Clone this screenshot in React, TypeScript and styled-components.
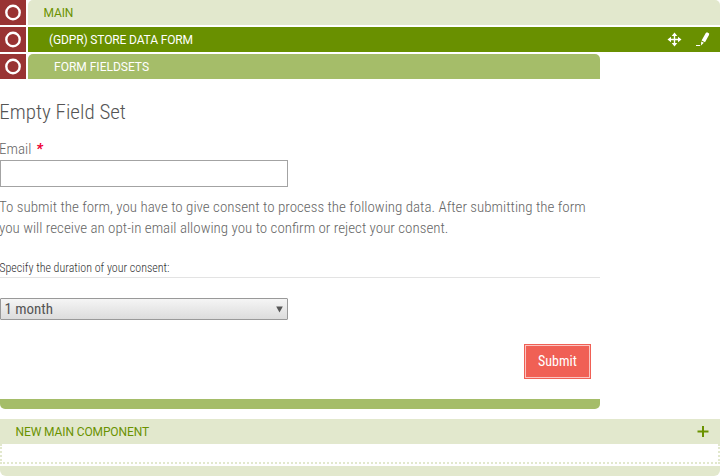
import React from "react";
import styled, { createGlobalStyle } from "styled-components";

const GlobalStyle = createGlobalStyle`
  * { box-sizing: border-box; }
  body {
    margin: 0;
    background: #fff;
    overflow: hidden;
    font-family: "Roboto Condensed", Roboto, sans-serif;
    font-stretch: 75%;
    font-weight: 300;
    color: #666;
  }
`;

const Page = styled.main`
  width: 720px;
  height: 476px;
  display: flex;
  flex-direction: column;
`;

const Row = styled.header<{ $width?: number }>`
  display: flex;
  gap: 2px;
  width: ${(p) => p.$width ?? 720}px;
  height: 25px;
  flex: none;
  margin-bottom: 2px;
`;

const Marker = styled.span`
  width: 26px;
  background: #993333;
  flex: none;
`;

const Bar = styled.div<{ $bg: string; $radius?: string; $indent: number }>`
  flex: 1;
  display: flex;
  align-items: center;
  height: 25px;
  padding-left: ${(p) => p.$indent}px;
  background: ${(p) => p.$bg};
  border-radius: ${(p) => p.$radius ?? "0"};
`;

const Caption = styled.span<{ $color: string; $spacing?: number }>`
  font: 400 12px/25px Roboto, sans-serif;
  font-stretch: 88%;
  padding-top: 2px;
  letter-spacing: ${(p) => p.$spacing ?? 0}px;
  color: ${(p) => p.$color};
  white-space: nowrap;
`;

const Tools = styled.span`
  display: flex;
  gap: 13px;
  margin: 0 10px 0 auto;
`;

const Form = styled.section`
  width: 600px;
  height: 318px;
  flex: none;
  display: flex;
  flex-direction: column;
`;

const Title = styled.h2`
  margin: 17px 0 0;
  text-indent: -0.7px;
  font-size: 21px;
  line-height: 28px;
  font-weight: 300;
  color: #555;
  white-space: nowrap;
`;

const Label = styled.label`
  margin-top: 12px;
  height: 22px;
  text-indent: -1px;
  font-size: 15px;
  line-height: 22px;
`;

const Required = styled.b`
  color: #ee0033;
  font-weight: 700;
  font-style: italic;
  margin-left: 1.5px;
`;

const Field = styled.input`
  width: 288px;
  height: 27px;
  border: 1px solid #a3a3a3;
  background: #fff;
  padding: 0 4px;
`;

const Copy = styled.p`
  margin: 10px 0 0 -1px;
  font-size: 15px;
  line-height: 21px;
  white-space: nowrap;
`;

const Legend = styled.h3`
  margin: 19px 0 0;
  height: 20px;
  text-indent: -0.7px;
  font-size: 12px;
  line-height: 20px;
  font-weight: 300;
  color: #333;
  border-bottom: 1px solid #e3e3e3;
`;

const Picker = styled.div`
  display: flex;
  align-items: center;
  justify-content: space-between;
  width: 288px;
  height: 22px;
  margin-top: 20px;
  padding: 0 4px 0 3.4px;
  border: 1px solid #999;
  border-radius: 1px;
  background: linear-gradient(#f5f5f5, #dcdcdc);
  color: #555;
  font-size: 15px;
  font-weight: 400;
`;

const Submit = styled.button`
  align-self: flex-end;
  width: 67px;
  height: 35px;
  margin: 24px 9px 0 0;
  padding: 0;
  border: 1px solid #f06055;
  background: #f06055;
  box-shadow: inset 0 0 0 1px #fbc5c1;
  color: #fff;
  font: 400 14px/31px "Roboto Condensed", Roboto, sans-serif;
  font-stretch: 75%;
`;

const FormEnd = styled.div`
  width: 600px;
  height: 10px;
  flex: none;
  margin-bottom: 10px;
  background: #a5bd69;
  border-radius: 0 0 5px 5px;
`;

const Adder = styled.div`
  height: 25px;
  flex: none;
  display: flex;
`;

const DropArea = styled.div`
  height: 20px;
  flex: none;
  margin-bottom: 2px;
  border: 2px dotted #e2e8cd;
  border-top: 0;
`;

const PageEnd = styled.div`
  height: 10px;
  flex: none;
  background: #e2e8cd;
  border-radius: 0 0 6px 6px;
`;

const Ring = () => (
  <Marker>
    <svg width="26" height="25" viewBox="0 0 26 25">
      <circle cx="13" cy="12.5" r="6.7" fill="none" stroke="#fff" strokeWidth="2.4" />
    </svg>
  </Marker>
);

const MoveIcon = () => (
  <svg width="15" height="15" viewBox="0 0 15 15">
    <path d="M7.5 2v11M2 7.5h11" stroke="#fff" strokeWidth="1.4" />
    <path d="M7.5.5 10.3 4H4.7zM7.5 14.5 4.7 11h5.6zM.5 7.5 4 4.7v5.6zM14.5 7.5 11 10.3V4.7z" fill="#fff" />
  </svg>
);

const PenIcon = () => (
  <svg width="15" height="15" viewBox="0 0 15 15">
    <path d="M10.8 1 12 .3 14.2 1.4 14 2.9 10 10.2 6.6 8.5zM6.2 9.4 8.9 10.8 6 13.6z" fill="#fff" />
    <path d="M1 13.5h4.2" stroke="#fff" strokeWidth="1" />
  </svg>
);

export default function App() {
  return (
    <>
      <GlobalStyle />
      <Page>
        <Row>
          <Ring />
          <Bar $bg="#e2e8cd" $radius="5px 5px 0 0" $indent={15.6}>
            <Caption $color="#6a9200" $spacing={-0.15}>MAIN</Caption>
          </Bar>
        </Row>
        <Row>
          <Ring />
          <Bar $bg="#699000" $indent={21}>
            <Caption $color="#fff" $spacing={-0.14}>(GDPR) STORE DATA FORM</Caption>
            <Tools>
              <MoveIcon />
              <PenIcon />
            </Tools>
          </Bar>
        </Row>
        <Row $width={600}>
          <Ring />
          <Bar $bg="#a5bd69" $radius="5px 5px 0 0" $indent={26}>
            <Caption $color="#fff">FORM FIELDSETS</Caption>
          </Bar>
        </Row>
        <Form>
          <Title>Empty Field Set</Title>
          <Label htmlFor="email">
            Email <Required>*</Required>
          </Label>
          <Field id="email" />
          <Copy>
            To submit the form, you have to give consent to process the following data. After submitting the form
            <br />
            you will receive an opt-in email allowing you to confirm or reject your consent.
          </Copy>
          <Legend>Specify the duration of your consent:</Legend>
          <Picker>
            <span>1 month</span>
            <svg width="7" height="7" viewBox="0 0 7 7">
              <path d="M.2.5h6.6L3.5 6.5z" fill="#555" />
            </svg>
          </Picker>
          <Submit>Submit</Submit>
        </Form>
        <FormEnd />
        <Adder>
          <Bar $bg="#e2e8cd" $indent={15.6}>
            <Caption $color="#6a9200" $spacing={-0.12}>NEW MAIN COMPONENT</Caption>
            <Tools>
              <svg width="15" height="15" viewBox="0 0 15 15">
                <path d="M8 2v11M2.5 7.5h11" stroke="#6a9200" strokeWidth="2" />
              </svg>
            </Tools>
          </Bar>
        </Adder>
        <DropArea />
        <PageEnd />
      </Page>
    </>
  );
}
